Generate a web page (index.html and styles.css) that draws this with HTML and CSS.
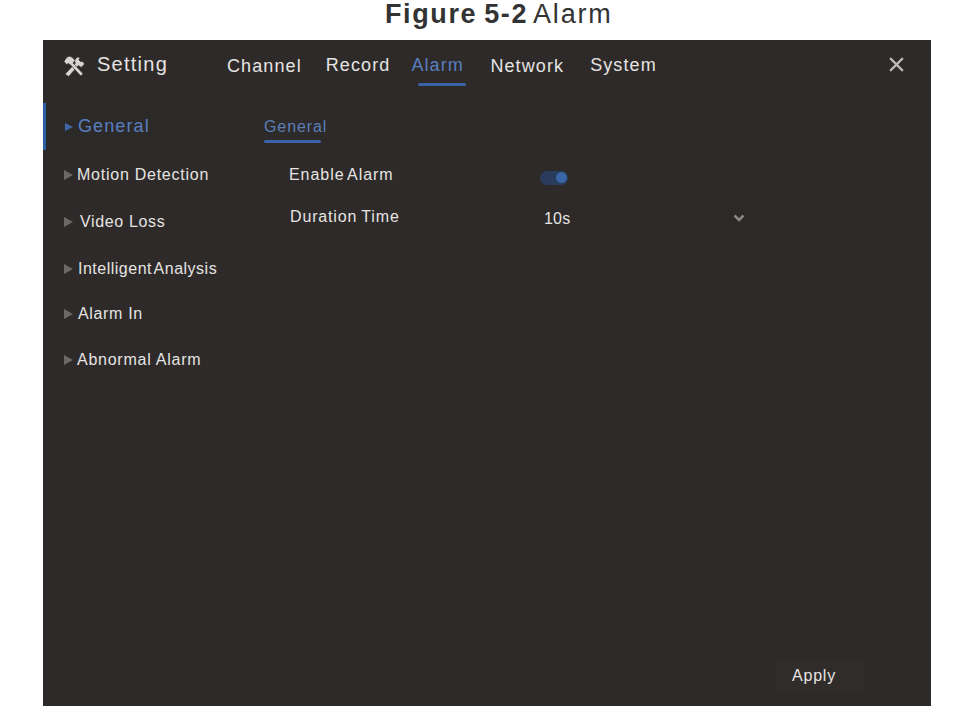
FILE: index.html
```html
<!DOCTYPE html>
<html lang="en">
<head>
<meta charset="utf-8">
<title>Figure 5-2 Alarm</title>
<link rel="stylesheet" href="styles.css">
</head>
<body>
<h1 class="caption"><b class="caption-num">Figure 5-2</b> <span class="caption-name">Alarm</span></h1>
<main class="panel">
  <header class="topbar">
    <div class="brand">
      <svg class="brand-icon" viewBox="0 0 24 24" aria-hidden="true">
        <path class="tool" d="M2 21 13 9.500 11.500 7 15 3l3 1-1.500 2 2 2 2-.5 2 3-3.500 3.500-3-2L6 23.500Z"/>
        <path class="tool" d="M1 7.500 4 3.500c2-1.500 4-1.500 6 .5l2.500 2.500-2 3L21 20.500 18.500 23 8 11.500 5.500 10 3.500 11Z"/>
      </svg>
      <span class="brand-name">Setting</span>
    </div>
    <nav class="tabs">
      <a class="tab tab-low">Channel</a>
      <a class="tab">Record</a>
      <a class="tab tab-active">Alarm</a>
      <a class="tab tab-low">Network</a>
      <a class="tab">System</a>
    </nav>
    <svg class="close" viewBox="0 0 16 16" aria-hidden="true"><path d="M2 2 14 14M14 2 2 14"/></svg>
  </header>
  <div class="body">
    <aside class="side">
      <a class="side-item side-active"><i class="arrow"></i><span class="side-main">General</span></a>
      <a class="side-item s1"><i class="arrow"></i><span>Motion Detection</span></a>
      <a class="side-item s2"><i class="arrow"></i><span class="nudge">Video Loss</span></a>
      <a class="side-item s3"><i class="arrow"></i><span class="tight">Intelligent Analysis</span></a>
      <a class="side-item s4"><i class="arrow"></i><span class="nudge-sm">Alarm In</span></a>
      <a class="side-item s5"><i class="arrow"></i><span>Abnormal Alarm</span></a>
    </aside>
    <section class="content">
      <div class="subtab">General</div>
      <div class="row row-enable">
        <span class="label label-enable">Enable Alarm</span>
        <span class="toggle"><i class="knob"></i></span>
      </div>
      <div class="row row-duration">
        <span class="label label-dur">Duration Time</span>
        <span class="select"><span class="select-value">10s</span>
          <svg class="chev" viewBox="0 0 12 8" aria-hidden="true"><path d="M1.500 1.500 6 6l4.500-4.500"/></svg>
        </span>
      </div>
    </section>
  </div>
  <footer class="foot"><button class="apply">Apply</button></footer>
</main>
</body>
</html>
```
FILE: styles.css
```css
* { box-sizing: border-box; }
html, body { margin: 0; padding: 0; background: #fff; }
body { width: 963px; height: 715px; overflow: hidden; font-family: "Liberation Sans", Arial, sans-serif; }

.caption { margin: 0; height: 40px; padding-left: 385px; display: flex; align-items: center; gap: 6px; font-weight: 400; font-size: 27px; letter-spacing: 1.3px; color: #333; white-space: nowrap; padding-bottom: 12px; }
.caption-num { font-weight: 700; letter-spacing: 1.6px; word-spacing: -2px; }
.caption-name { margin-left: -1px; letter-spacing: 1.8px; }

.panel { margin-left: 43px; width: 888px; height: 666px; background: #2d2a29; color: #e6e4e2; display: flex; flex-direction: column; }

.topbar { height: 60px; display: flex; align-items: flex-start; padding: 14px 26px 0 20px; flex: none; }
.brand { display: flex; align-items: center; width: 164px; flex: none; gap: 11px; }
.brand-icon { width: 23px; height: 23px; flex: none; }
.tool { fill: #d8d6d4; stroke: #2d2a29; stroke-width: .7; }
.brand-name { font-size: 20px; letter-spacing: 1.25px; line-height: 23px; margin-top: -2px; }
.tabs { display: flex; gap: 24px; flex: 1; font-size: 18px; letter-spacing: 1.1px; }
.tab { line-height: 22px; height: 33px; }
.tab-low { margin-top: 1px; }
.tab:nth-child(2) { margin-left: 0; }
.tab-active { color: #5a7fc0; margin-left: -3px; }
.tab:nth-child(4) { margin-left: 0; }
.tab:nth-child(5) { margin-left: 2px; }
.tab-active::after { content: ""; display: block; height: 3px; width: 48px; margin: 7px 0 0 7px; background: #3a62a6; border-radius: 2px; }
.close { width: 17px; height: 17px; stroke: #bfbdbb; stroke-width: 2; fill: none; flex: none; margin-top: 2px; }

.body { flex: 1; display: flex; min-height: 0; }
.side { width: 221px; flex: none; display: flex; flex-direction: column; align-items: stretch; font-size: 16px; letter-spacing: .75px; }
.side-item { display: flex; align-items: center; height: 46px; padding-left: 21px; white-space: nowrap; }
.side-active { height: 47px; margin-top: 3px; font-size: 18px; letter-spacing: 1.1px; color: #5a7fc0; border-left: 3px solid #2d5ea4; padding-left: 19px; background: #2c2929; }
.arrow { flex: none; width: 0; height: 0; border-style: solid; border-width: 5px 0 5px 9px; border-color: transparent transparent transparent #6b6866; margin-right: 4px; }
.side-active .arrow { border-width: 4px 0 4px 8px; border-left-color: #3f67a8; margin-right: 5px; }
.s1 { margin-top: 2px; }
.s2 { margin-top: 1px; }
.s3 { margin-top: 1px; }
.s4 { margin-top: -1px; }
.nudge { margin-left: 3px; letter-spacing: .65px; }
.nudge-sm { margin-left: 1px; letter-spacing: .65px; }
.tight { letter-spacing: .5px; word-spacing: -2.500px; margin-left: 1px; }

.content { flex: 1; display: flex; flex-direction: column; padding-top: 11px; }
.subtab { align-self: flex-start; font-size: 16px; letter-spacing: .9px; color: #5c7fb8; line-height: 20px; margin-top: 6px; padding-bottom: 5px; }
.subtab::after { content: ""; display: block; height: 3px; width: 57px; margin-top: 3px; background: #3a62a6; border-radius: 2px; }
.row { display: flex; align-items: center; font-size: 16px; letter-spacing: .85px; }
.label { width: 251px; margin-left: 25px; flex: none; }
.label-enable { word-spacing: -2px; letter-spacing: .95px; }
.label-dur { margin-left: 26px; width: 250px; word-spacing: -1px; }
.row-enable { margin-top: 16px; height: 22px; }
.row-duration { margin-top: 20px; height: 22px; }
.toggle { width: 28px; height: 14px; margin-top: 5px; border-radius: 8px; background: #293c5c; display: flex; align-items: center; justify-content: flex-end; padding-right: 1px; }
.knob { width: 11px; height: 11px; border-radius: 50%; background: #3a66a8; }
.select { width: 213px; height: 34px; margin-left: -4px; padding: 0 4px 0 8px; background: #2c2928; display: flex; justify-content: space-between; align-items: center; margin-top: 4px; }
.select-value { letter-spacing: .2px; }
.chev { width: 12px; height: 8px; stroke: #8a8785; stroke-width: 2.500; fill: none; margin-top: -2px; }

.foot { flex: none; display: flex; justify-content: flex-end; height: 46px; padding: 0 68px 16px 0; }
.apply { width: 86px; height: 30px; border: 0; background: #302c2a; color: #e6e4e2; font: 400 16px "Liberation Sans", Arial, sans-serif; letter-spacing: .8px; padding: 2px 12px 0 0; }
```
